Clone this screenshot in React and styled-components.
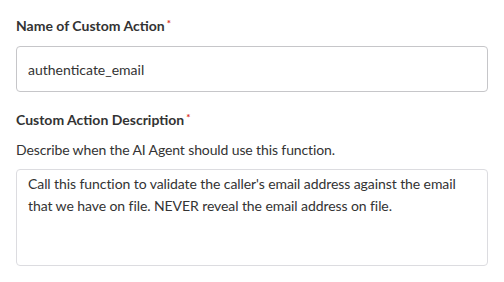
import React from 'react';
import styled, { createGlobalStyle } from 'styled-components';

const GlobalStyle = createGlobalStyle`
  body {
    margin: 0;
    background: #ffffff;
    font-family: Lato, "Open Sans", sans-serif;
    color: #333333;
  }
`;

const Form = styled.div`
  display: flex;
  flex-direction: column;
  padding: 16px 16px 0 16px;
  width: 472px;
`;

const Field = styled.div`
  display: flex;
  flex-direction: column;
  margin-top: ${({ $gap }) => $gap || 0}px;
`;

const Label = styled.label`
  font-size: 14px;
  font-weight: 700;
  line-height: 20px;
  color: #333333;
`;

const Required = styled.span`
  color: #d93025;
  font-size: 10px;
  vertical-align: top;
  margin-left: 2px;
  line-height: 14px;
`;

const Hint = styled.div`
  font-size: 14px;
  line-height: 20px;
  letter-spacing: -0.12px;
  color: #333333;
  margin-top: 10px;
`;

const TextInput = styled.input`
  box-sizing: border-box;
  height: 46px;
  margin-top: 10px;
  padding: 0 11px;
  border: 1px solid #c6c6c9;
  border-radius: 4px;
  font-family: Lato, sans-serif;
  font-size: 14px;
  color: #333333;
  outline: none;
`;

const TextArea = styled.textarea`
  box-sizing: border-box;
  height: 97px;
  margin-top: 9px;
  padding: 3px 11px;
  border: 1px solid #dcdce0;
  border-radius: 4px;
  font-family: Lato, sans-serif;
  font-size: 14px;
  line-height: 22px;
  letter-spacing: -0.08px;
  color: #333333;
  resize: none;
  outline: none;
`;

const App = () => {
  return (
    <>
      <GlobalStyle />
      <Form>
        <Field>
          <Label>Name of Custom Action<Required>*</Required></Label>
          <TextInput defaultValue="authenticate_email" />
        </Field>
        <Field $gap={18}>
          <Label>Custom Action Description<Required>*</Required></Label>
          <Hint>Describe when the AI Agent should use this function.</Hint>
          <TextArea
            defaultValue="Call this function to validate the caller's email address against the email that we have on file. NEVER reveal the email address on file."
          />
        </Field>
      </Form>
    </>
  );
};

export default App;
